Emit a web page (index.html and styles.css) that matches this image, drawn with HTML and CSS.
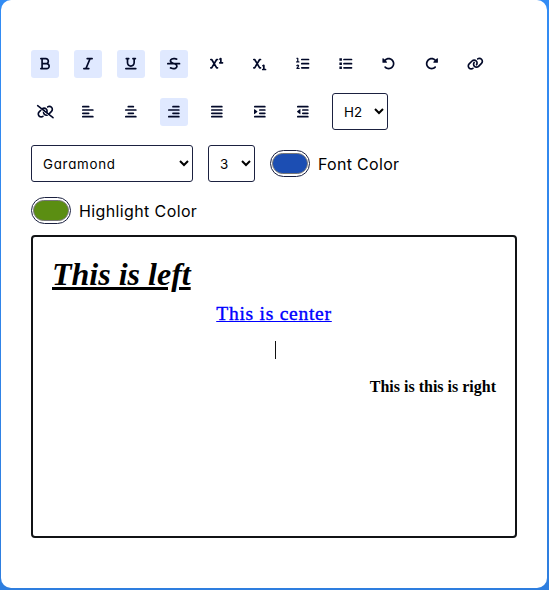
FILE: index.html
```html
<!DOCTYPE html>
<html lang="en">
<head>
<meta charset="utf-8">
<title>Text Editor</title>
<link rel="stylesheet" href="styles.css">
</head>
<body>
<main class="container">
<div class="options">
<button class="option active" aria-label="Bold"><svg viewBox="0 0 384 512"><path d="M0 64C0 46.3 14.3 32 32 32H80 96 224c70.7 0 128 57.3 128 128c0 31.3-11.3 60.1-30 82.3c37.1 22.4 62 63.1 62 109.7c0 70.7-57.3 128-128 128H96 80 32c-17.7 0-32-14.3-32-32s14.3-32 32-32H48V256 96H32C14.3 96 0 81.7 0 64zM224 224c35.3 0 64-28.7 64-64s-28.7-64-64-64H112V224H224zM112 288V416H256c35.3 0 64-28.7 64-64s-28.7-64-64-64H224 112z"/></svg></button>
<button class="option active" aria-label="Italic"><svg viewBox="0 0 384 512"><path d="M128 64c0-17.7 14.3-32 32-32H352c17.7 0 32 14.3 32 32s-14.3 32-32 32H293.3L160 416h64c17.7 0 32 14.3 32 32s-14.3 32-32 32H32c-17.7 0-32-14.3-32-32s14.3-32 32-32H90.7L224 96H160c-17.7 0-32-14.3-32-32z"/></svg></button>
<button class="option active" aria-label="Underline"><svg viewBox="0 0 448 512"><path d="M16 64c0-17.7 14.3-32 32-32h96c17.7 0 32 14.3 32 32s-14.3 32-32 32H128V224c0 53 43 96 96 96s96-43 96-96V96H304c-17.7 0-32-14.3-32-32s14.3-32 32-32h96c17.7 0 32 14.3 32 32s-14.3 32-32 32H384V224c0 88.4-71.6 160-160 160s-160-71.6-160-160V96H48C30.3 96 16 81.7 16 64zM0 448c0-17.7 14.3-32 32-32H416c17.7 0 32 14.3 32 32s-14.3 32-32 32H32c-17.7 0-32-14.3-32-32z"/></svg></button>
<button class="option active" aria-label="Strikethrough"><svg class="line" viewBox="0 0 512 512"><path d="M32 256H480M370 78L300 66C220 54 135 76 131 145C128 205 195 232 256 256M310 270C365 292 387 325 382 364C372 440 288 458 210 442L137 420"/></svg></button>
<button class="option" aria-label="Superscript"><svg class="line" viewBox="0 0 512 512"><path d="M32 96H64L256 416H288M32 416H64L256 96H288M384 78L416 62V224M376 224H480"/></svg></button>
<button class="option" aria-label="Subscript"><svg class="line" viewBox="0 0 512 512"><path d="M32 96H64L256 416H288M32 416H64L256 96H288M384 334L416 318V480M376 480H480"/></svg></button>
<button class="option" aria-label="Ordered list"><svg class="line" viewBox="0 0 512 512"><path d="M224 96H480M224 256H480M224 416H480"/><path class="thin" d="M32 48H68V190M24 190H112M32 330C70 285 122 322 92 356L36 440H120"/></svg></button>
<button class="option" aria-label="Unordered list"><svg class="line" viewBox="0 0 512 512"><path d="M192 96H480M192 256H480M192 416H480"/><path class="fill" d="M16 48H112V144H16ZM16 208H112V304H16ZM16 368H112V464H16Z"/></svg></button>
<button class="option" aria-label="Undo"><svg viewBox="0 0 512 512"><path d="M48.5 224H40c-13.3 0-24-10.7-24-24V72c0-9.7 5.8-18.5 14.8-22.2s19.3-1.7 26.2 5.2L98.6 96.6c87.6-86.5 228.7-86.2 315.8 1c87.5 87.5 87.5 229.3 0 316.8s-229.3 87.5-316.8 0c-12.5-12.5-12.5-32.8 0-45.3s32.8-12.5 45.3 0c62.5 62.5 163.8 62.5 226.3 0s62.5-163.8 0-226.3c-62.2-62.2-162.7-62.5-225.3-1L185 183c6.9 6.9 8.9 17.2 5.2 26.2s-12.5 14.8-22.2 14.8H48.5z"/></svg></button>
<button class="option" aria-label="Redo"><svg class="mirror" viewBox="0 0 512 512"><path d="M48.5 224H40c-13.3 0-24-10.7-24-24V72c0-9.7 5.8-18.5 14.8-22.2s19.3-1.7 26.2 5.2L98.6 96.6c87.6-86.5 228.7-86.2 315.8 1c87.5 87.5 87.5 229.3 0 316.8s-229.3 87.5-316.8 0c-12.5-12.5-12.5-32.8 0-45.3s32.8-12.5 45.3 0c62.5 62.5 163.8 62.5 226.3 0s62.5-163.8 0-226.3c-62.2-62.2-162.7-62.5-225.3-1L185 183c6.9 6.9 8.9 17.2 5.2 26.2s-12.5 14.8-22.2 14.8H48.5z"/></svg></button>
<button class="option" aria-label="Link"><svg viewBox="0 0 640 512"><path id="chain" d="M579.8 267.7c56.5-56.5 56.5-148 0-204.5c-50-50-128.8-56.5-186.3-15.4l-1.6 1.1c-14.4 10.3-17.7 30.3-7.4 44.6s30.3 17.7 44.6 7.4l1.6-1.1c32.1-22.9 76-19.3 103.8 8.6c31.5 31.5 31.5 82.5 0 114L422.3 334.8c-31.5 31.5-82.5 31.5-114 0c-27.9-27.9-31.5-71.8-8.6-103.8l1.1-1.6c10.3-14.4 6.9-34.4-7.4-44.6s-34.4-6.9-44.6 7.4l-1.1 1.6C206.5 251.2 213 330 263 380c56.5 56.5 148 56.5 204.5 0L579.8 267.7zM60.2 244.3c-56.5 56.5-56.5 148 0 204.5c50 50 128.8 56.5 186.3 15.4l1.6-1.1c14.4-10.3 17.7-30.3 7.4-44.6s-30.3-17.7-44.6-7.4l-1.6 1.1c-32.1 22.9-76 19.3-103.8-8.6C74 372 74 321 105.5 289.5L217.7 177.2c31.5-31.5 82.5-31.5 114 0c27.9 27.9 31.5 71.8 8.6 103.9l-1.1 1.6c-10.3 14.4-6.9 34.4 7.4 44.6s34.4 6.9 44.6-7.4l1.1-1.6C433.5 260.8 427 182 377 132c-56.5-56.5-148-56.5-204.5 0L60.2 244.3z"/></svg></button>
<button class="option" aria-label="Unlink"><svg viewBox="0 0 640 512"><mask id="cut"><path d="M0 0H640V512H0Z" fill="white"/><path d="M0 50L600 520" stroke="black" stroke-width="36"/></mask><g mask="url(#cut)"><use href="#chain"/></g><path d="M24 24L616 488" stroke="currentColor" stroke-width="58" stroke-linecap="round"/></svg></button>
<button class="option" aria-label="Align left"><svg class="line" viewBox="0 0 448 512"><path d="M32 64H256M32 192H416M32 320H256M32 448H416"/></svg></button>
<button class="option" aria-label="Align center"><svg class="line" viewBox="0 0 448 512"><path d="M128 64H320M32 192H416M128 320H320M32 448H416"/></svg></button>
<button class="option active" aria-label="Align right"><svg class="line" viewBox="0 0 448 512"><path d="M192 64H416M32 192H416M192 320H416M32 448H416"/></svg></button>
<button class="option" aria-label="Justify"><svg class="line" viewBox="0 0 448 512"><path d="M32 64H416M32 192H416M32 320H416M32 448H416"/></svg></button>
<button class="option" aria-label="Indent"><svg class="line" viewBox="0 0 448 512"><path d="M32 64H416M224 192H416M224 320H416M32 448H416"/><path class="fill" d="M0 176Q0 150 24 166L124 242Q138 256 124 270L24 346Q0 362 0 336Z"/></svg></button>
<button class="option" aria-label="Outdent"><svg class="line" viewBox="0 0 448 512"><path d="M32 64H416M224 192H416M224 320H416M32 448H416"/><path class="fill" d="M132 176Q132 150 108 166L8 242Q-6 256 8 270L108 346Q132 362 132 336Z"/></svg></button>
<select class="heading" aria-label="Heading"><option>H2</option></select>
<select class="family" aria-label="Font family"><option>Garamond</option></select>
<select class="size" aria-label="Font size"><option>3</option></select>
<label class="picker"><span class="ring"><span class="swatch blue"></span></span><span class="font-label">Font Color</span></label>
<label class="picker"><span class="ring"><span class="swatch green"></span></span><span class="highlight-label">Highlight Color</span></label>
</div>
<div class="editor">
<div class="left">This is left</div>
<div class="center"><a class="link">This is center</a></div>
<div class="caret-line"><span class="caret"></span></div>
<div class="right">This is this is right</div>
</div>
</main>
</body>
</html>
```
FILE: styles.css
```css
* { box-sizing: border-box; margin: 0; padding: 0; }
body {
  height: 590px;
  padding: 0 2px 2px 1px;
  overflow: hidden;
  background: linear-gradient(#338cf4, #2e7edf);
}
.container {
  height: 588px;
  padding: 50px 30px;
  background: #fff;
  border-radius: 10px;
}
.options {
  display: flex;
  flex-wrap: wrap;
  align-items: center;
  column-gap: 15px;
  row-gap: 15px;
  font-family: Inter, sans-serif;
  font-feature-settings: "cv11";
}
.option {
  display: grid;
  place-items: center;
  width: 28px;
  height: 28px;
  border: 0;
  border-radius: 3px;
  background: #fff;
  color: #020929;
}
.option.active { background: #e0e9ff; }
.option svg { height: 13.33px; width: auto; display: block; fill: currentColor; overflow: visible; }
.option .line { fill: none; stroke: currentColor; stroke-width: 66; stroke-linecap: round; stroke-linejoin: round; }
.option .thin { stroke-width: 46; }
.option .fill { fill: currentColor; stroke: none; }
.option .mirror { transform: scaleX(-1); }
select {
  height: 37px;
  padding: 7px;
  border: 1px solid #1b2140;
  border-radius: 3px;
  background: #fff;
  color: #000;
  font: 13.33px Inter, sans-serif;
  font-feature-settings: "cv11";
}
.heading { width: 56px; }
.family { width: 162px; letter-spacing: 0.75px; }
.size { width: 47px; }
.picker { display: flex; align-items: center; gap: 8px; height: 27px; font-size: 16px; white-space: nowrap; }
.font-label { letter-spacing: 0.3px; }
.highlight-label { letter-spacing: 0.38px; }
.ring {
  display: grid;
  place-items: center;
  width: 40px;
  height: 27px;
  border: 1px solid #1b2140;
  border-radius: 15px;
}
.swatch { width: 36px; height: 21px; border: 1px solid #777; border-radius: 15px; }
.blue { background: #1c4eb3; }
.green { background: #5b8e12; }
.editor {
  height: 303px;
  margin-top: 11px;
  padding: 19px;
  border: 2px solid #111315;
  border-radius: 4px;
  font-family: "Liberation Serif", serif;
  color: #000;
}
.left { height: 44px; font-size: 32px; line-height: 37px; font-weight: bold; font-style: italic; text-decoration: underline; }
.center { height: 41px; text-align: center; font-size: 19.5px; line-height: 28px; }
.link { color: #00f; text-decoration: underline; letter-spacing: 0.75px; -webkit-text-stroke: 0.4px #00f; }
.caret-line { display: flex; justify-content: center; height: 37px; }
.caret { width: 1px; height: 18px; margin-left: 3px; background: #111; }
.right { text-align: right; font-size: 16px; line-height: 18px; font-weight: bold; }
```
